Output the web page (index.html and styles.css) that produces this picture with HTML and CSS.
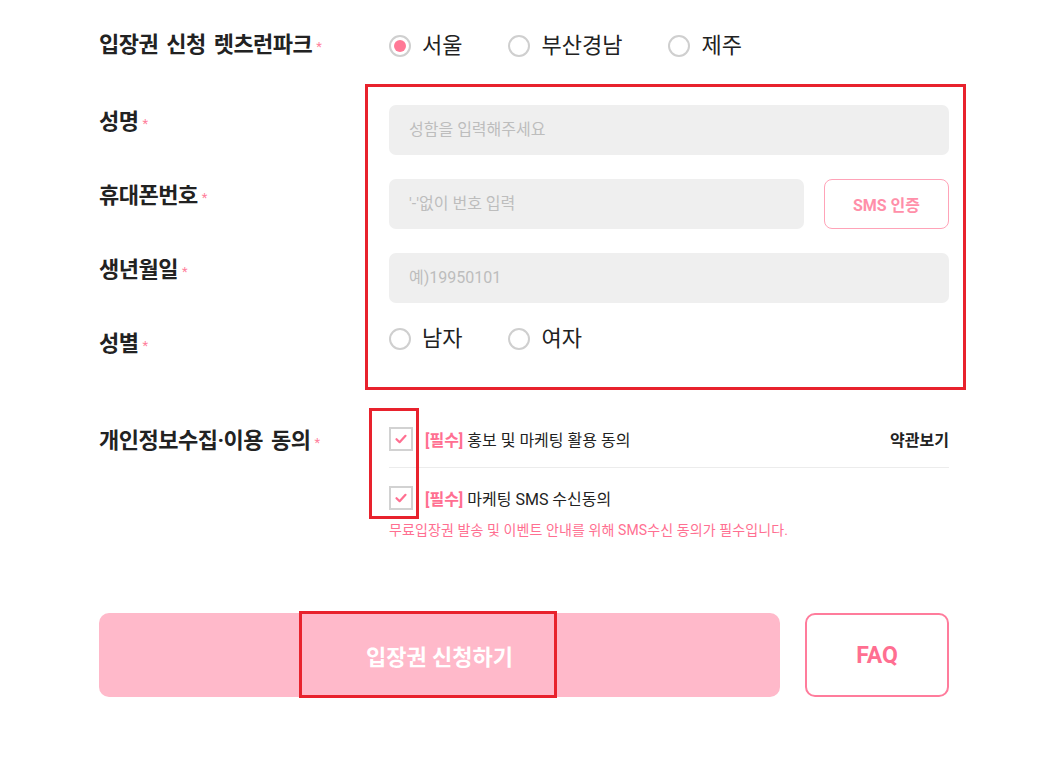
FILE: index.html
```html
<!DOCTYPE html>
<html lang="ko">
<head>
    <meta charset="UTF-8">
    <meta name="viewport" content="width=device-width, initial-scale=1.0">
    <title>입장권 신청</title>
    <link rel="stylesheet" href="styles.css">
</head>
<body>

    <div class="form">

        <div class="row row-region">
            <div class="label">입장권 신청 렛츠런파크<span class="req">*</span></div>
            <div class="options">
                <label class="radio"><span class="dot on"></span>서울</label>
                <label class="radio"><span class="dot"></span>부산경남</label>
                <label class="radio"><span class="dot"></span>제주</label>
            </div>
        </div>

        <div class="fields">
            <div class="row">
                <div class="label pad">성명<span class="req">*</span></div>
                <div class="field"><div class="input">성함을 입력해주세요</div></div>
            </div>
            <div class="row">
                <div class="label pad">휴대폰번호<span class="req">*</span></div>
                <div class="field">
                    <div class="input">'-'없이 번호 입력</div>
                    <button class="sms">SMS 인증</button>
                </div>
            </div>
            <div class="row">
                <div class="label pad">생년월일<span class="req">*</span></div>
                <div class="field"><div class="input">예)19950101</div></div>
            </div>
            <div class="row row-gender">
                <div class="label pad">성별<span class="req">*</span></div>
                <div class="options">
                    <label class="radio"><span class="dot"></span>남자</label>
                    <label class="radio"><span class="dot"></span>여자</label>
                </div>
            </div>
            <div class="mark mark-fields"></div>
        </div>

        <div class="row row-agree">
            <div class="label pad-s">개인정보수집·이용 동의<span class="req">*</span></div>
            <div class="agree">
                <div class="agree-item first">
                    <span class="check">
                        <svg width="14" height="14" viewBox="0 0 14 14"><path d="M2.5 7.2 L5.6 10.2 L11.5 3.8" fill="none" stroke="#ff6f91" stroke-width="2.2" stroke-linecap="round" stroke-linejoin="round"/></svg>
                    </span>
                    <span class="agree-text"><b>[필수]</b> 홍보 및 마케팅 활용 동의</span>
                    <a class="terms">약관보기</a>
                </div>
                <div class="agree-item">
                    <span class="check">
                        <svg width="14" height="14" viewBox="0 0 14 14"><path d="M2.5 7.2 L5.6 10.2 L11.5 3.8" fill="none" stroke="#ff6f91" stroke-width="2.2" stroke-linecap="round" stroke-linejoin="round"/></svg>
                    </span>
                    <span class="agree-text"><b>[필수]</b> 마케팅 SMS 수신동의</span>
                </div>
                <p class="notice">무료입장권 발송 및 이벤트 안내를 위해 SMS수신 동의가 필수입니다.</p>
                <div class="mark mark-checks"></div>
            </div>
        </div>

        <div class="buttons">
            <button class="submit">입장권 신청하기<span class="mark mark-submit"></span></button>
            <button class="faq">FAQ</button>
        </div>

    </div>

</body>
</html>
```

FILE: styles.css
```css
body {
    margin: 0;
    font-family: Roboto, "Noto Sans CJK KR", sans-serif;
    color: #222;
    background: #fff;
}
.form {
    width: 850px;
    padding: 26px 0 60px 99px;
}
.row {
    display: grid;
    grid-template-columns: 290px 1fr;
    margin-bottom: 24px;
}
.label {
    font-size: 22px;
    font-weight: bold;
    line-height: 24px;
    color: #222;
    letter-spacing: -0.5px;
    word-spacing: 3px;
}
.label.pad {
    padding-top: 5px;
}
.label.pad-s {
    padding-top: 2px;
}
.req {
    font-size: 13px;
    color: #ff7f9c;
    margin-left: 4px;
    vertical-align: 1px;
    font-weight: normal;
}
.row-region {
    align-items: center;
    height: 40px;
    margin-bottom: 39px;
}
.options {
    display: flex;
    align-items: center;
}
.radio {
    display: flex;
    align-items: center;
    font-size: 22px;
    line-height: 24px;
    margin-right: 46px;
}
.dot {
    width: 18px;
    height: 18px;
    border: 2px solid #cfcfcf;
    border-radius: 50%;
    margin-right: 11px;
    display: flex;
    align-items: center;
    justify-content: center;
}
.dot.on::after {
    content: "";
    width: 12px;
    height: 12px;
    border-radius: 50%;
    background: #ff7996;
}
.fields {
    position: relative;
}
.field {
    display: flex;
    gap: 20px;
}
.input {
    flex: 1;
    height: 50px;
    background: #efefef;
    border-radius: 7px;
    padding-left: 20px;
    font-size: 16px;
    line-height: 50px;
    color: #bdbdbd;
}
.sms {
    width: 125px;
    height: 50px;
    background: #fff;
    border: 1px solid #ffa3b8;
    border-radius: 8px;
    color: #ff8fa9;
    font-family: Roboto, "Noto Sans CJK KR", sans-serif;
    font-size: 16px;
    font-weight: bold;
}
.row-gender {
    height: 24px;
}
.row-gender .options {
    height: 24px;
}
.fields .row-gender {
    margin-bottom: 76px;
}
.mark {
    position: absolute;
    border: 3px solid #e8222d;
    box-sizing: border-box;
    pointer-events: none;
}
.mark-fields {
    left: 266px;
    top: -21px;
    width: 601px;
    height: 306px;
}
.agree {
    position: relative;
}
.agree-item {
    display: flex;
    align-items: center;
    height: 24px;
    font-size: 16px;
}
.agree-item.first {
    padding-bottom: 16px;
    border-bottom: 1px solid #ececec;
    margin-bottom: 18px;
}
.check {
    width: 20px;
    height: 20px;
    border: 2px solid #d2d2d2;
    display: flex;
    align-items: center;
    justify-content: center;
    margin-right: 12px;
}
.agree-text b {
    color: #ff6f91;
}
.terms {
    margin-left: auto;
    font-weight: bold;
}
.notice {
    margin: 9px 0 0;
    font-size: 14px;
    letter-spacing: 0.1px;
    color: #ff6f91;
}
.mark-checks {
    left: -20px;
    top: -19px;
    width: 50px;
    height: 111px;
}
.buttons {
    display: flex;
    gap: 25px;
    margin-top: 74px;
}
.submit {
    position: relative;
    width: 681px;
    height: 84px;
    background: #ffb9ca;
    border: none;
    border-radius: 10px;
    color: #fff;
    font-family: Roboto, "Noto Sans CJK KR", sans-serif;
    font-size: 22px;
    font-weight: bold;
}
.mark-submit {
    left: 200px;
    top: -2px;
    width: 258px;
    height: 87px;
}
.faq {
    width: 144px;
    height: 84px;
    background: #fff;
    border: 2px solid #ff7c9c;
    border-radius: 10px;
    color: #ff6f91;
    font-family: Roboto, "Noto Sans CJK KR", sans-serif;
    font-size: 23px;
    font-weight: bold;
}
```
